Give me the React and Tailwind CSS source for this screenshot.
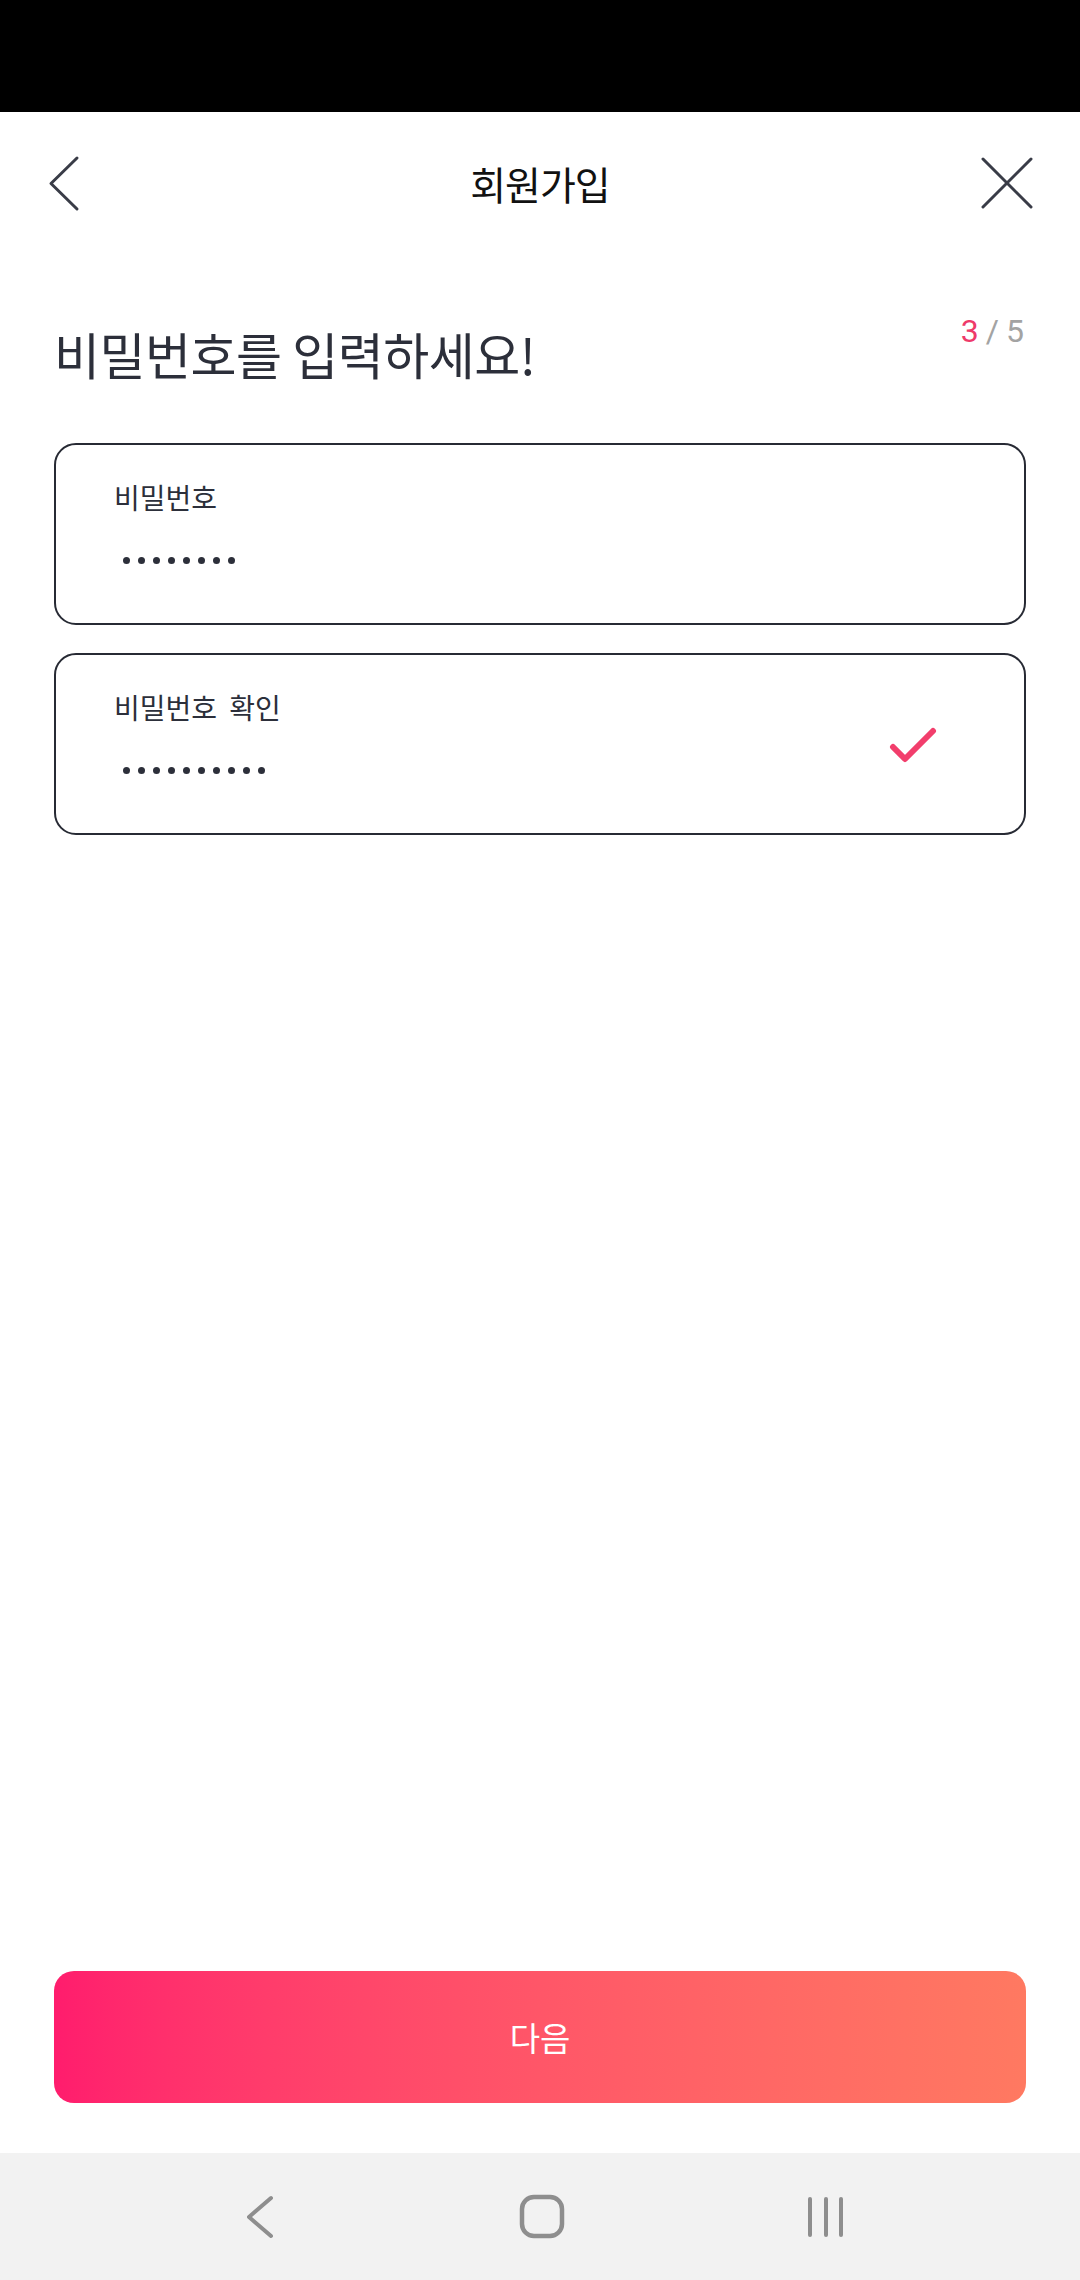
export default function App() {
  const kr = "font-['Noto_Sans_CJK_KR','Noto_Sans',sans-serif]";
  const Dots = ({ n }) => (
    <div className="flex items-center gap-[8px] h-[8px]">
      {Array.from({ length: n }).map((_, i) => (
        <span key={i} className="block w-[7px] h-[7px] rounded-full bg-[#2c2f3a]" />
      ))}
    </div>
  );
  return (
    <div className={`w-[1080px] h-[2280px] bg-white flex flex-col ${kr}`}>
      <div className="h-[112px] bg-black shrink-0" />
      {/* header */}
      <div className="h-[142px] shrink-0 grid grid-cols-[1fr_auto_1fr] items-center">
        <div className="pl-[48px] flex items-center">
          <svg width="32" height="58" viewBox="0 0 32 58" fill="none">
            <polyline points="29,4 3,29.5 29,55" stroke="#393c47" strokeWidth="3" strokeLinecap="round" strokeLinejoin="round" />
          </svg>
        </div>
        <div className="text-[39px] leading-none font-normal text-[#111111] tracking-[-1px]">회원가입</div>
        <div className="pr-[47px] flex justify-end items-center">
          <svg width="52" height="52" viewBox="0 0 52 52" fill="none">
            <line x1="2" y1="2" x2="50" y2="50" stroke="#393c47" strokeWidth="3" strokeLinecap="round" />
            <line x1="50" y1="2" x2="2" y2="50" stroke="#393c47" strokeWidth="3" strokeLinecap="round" />
          </svg>
        </div>
      </div>
      {/* title row */}
      <div className="pt-[61px] px-[54px] flex justify-between items-start shrink-0">
        <div className="mt-[13px] text-[50px] leading-none text-[#2c2f3a] font-normal tracking-[-0.5px]">비밀번호를 입력하세요!</div>
        <div className="text-[32px] leading-none font-['Roboto',sans-serif] flex gap-[7px] pr-[2px]">
          <span className="text-[#ee3a6a]">3</span>
          <span className="text-[#a3a3a3]">/</span>
          <span className="text-[#a3a3a3]">5</span>
        </div>
      </div>
      {/* fields */}
      <div className="mt-[65px] px-[54px] flex flex-col gap-[28px] shrink-0">
        <div className="h-[182px] border-2 border-[#272a34] rounded-[22px] flex items-start">
          <div className="flex-1 pl-[58px] pt-[38px] flex flex-col">
            <div className="text-[28px] leading-none text-[#2c2f3a]">비밀번호</div>
            <div className="mt-[45px] pl-[9px]"><Dots n={8} /></div>
          </div>
        </div>
        <div className="h-[182px] border-2 border-[#272a34] rounded-[22px] flex items-center">
          <div className="flex-1 self-start pl-[58px] pt-[38px] flex flex-col">
            <div className="text-[28px] leading-none text-[#2c2f3a] [word-spacing:6px]">비밀번호 확인</div>
            <div className="mt-[45px] pl-[9px]"><Dots n={10} /></div>
          </div>
          <svg className="mr-[87px] mt-[1px]" width="48" height="36" viewBox="0 0 48 36" fill="none">
            <polyline points="4,20 16,32 44,4" stroke="#f23e6c" strokeWidth="6" strokeLinecap="round" strokeLinejoin="round" />
          </svg>
        </div>
      </div>
      <div className="flex-1" />
      {/* button */}
      <div className="px-[54px] pb-[50px] shrink-0">
        <div className="h-[132px] rounded-[20px] bg-gradient-to-r from-[#ff1c6d] to-[#ff7961] flex items-center justify-center">
          <span className="text-[33px] leading-none text-white">다음</span>
        </div>
      </div>
      {/* nav */}
      <div className="h-[127px] bg-[#f2f2f2] shrink-0 flex items-center pl-[247px]">
        <svg width="28" height="44" viewBox="0 0 28 44" fill="none">
          <polyline points="24,3 2,22 24,41" stroke="#8e8e8e" strokeWidth="4" strokeLinecap="round" strokeLinejoin="round" />
        </svg>
        <svg className="ml-[244px]" width="46" height="45" viewBox="0 0 46 45" fill="none">
          <rect x="3" y="3" width="40" height="39" rx="12" stroke="#8e8e8e" strokeWidth="4.5" />
        </svg>
        <svg className="ml-[241px]" width="40" height="44" viewBox="0 0 40 44" fill="none">
          <line x1="4" y1="4" x2="4" y2="40" stroke="#8e8e8e" strokeWidth="4" strokeLinecap="round" />
          <line x1="20" y1="4" x2="20" y2="40" stroke="#8e8e8e" strokeWidth="4" strokeLinecap="round" />
          <line x1="35" y1="4" x2="35" y2="40" stroke="#8e8e8e" strokeWidth="4" strokeLinecap="round" />
        </svg>
      </div>
    </div>
  );
}
